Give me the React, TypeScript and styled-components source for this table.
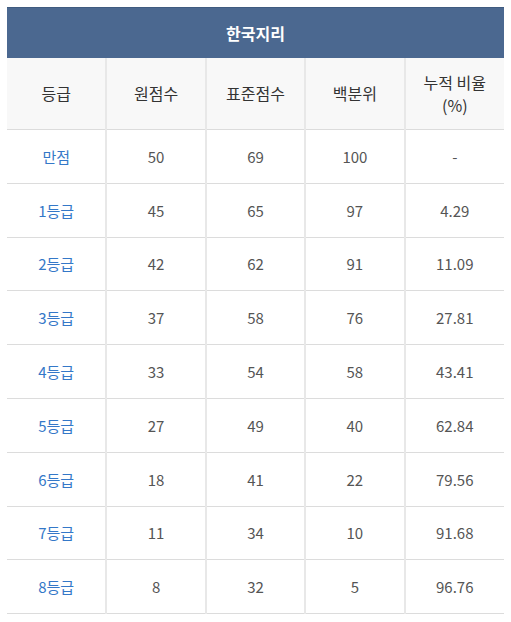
import React from "react";
import styled, { createGlobalStyle } from "styled-components";

const Global = createGlobalStyle`
  html, body { margin: 0; padding: 0; background: #fff; }
  body { font-family: "Noto Sans CJK KR", "Noto Sans", sans-serif; }
`;

const Wrap = styled.div`
  padding: 7px 7px 0 7px;
`;

const Table = styled.table`
  width: 497px;
  border-collapse: collapse;
  table-layout: fixed;
  font-size: 15px;
  color: #555;
`;

const TitleCell = styled.th`
  height: 50px;
  padding: 0;
  background: #4b6890;
  color: #fff;
  font-weight: 700;
  font-size: 16px;
  text-align: center;
  border-top: 1px solid #3f5b80;
`;

const HeadCell = styled.th<{ $last?: boolean }>`
  height: 71px;
  padding: 0;
  background: #f8f8f8;
  color: #333;
  font-weight: 400;
  font-size: 16px;
  line-height: 23px;
  text-align: center;
  border-bottom: 1px solid #dcdcdc;
  border-right: ${(p) => (p.$last ? "none" : "2px solid #e8e8e8")};
`;

const Cell = styled.td<{ $last?: boolean; $grade?: boolean }>`
  height: 52.8px;
  padding: 0;
  text-align: center;
  color: ${(p) => (p.$grade ? "#3478c8" : "#555")};
  border-bottom: 1px solid #dcdcdc;
  border-right: ${(p) => (p.$last ? "none" : "2px solid #e8e8e8")};
`;

const rows = [
  ["만점", "50", "69", "100", "-"],
  ["1등급", "45", "65", "97", "4.29"],
  ["2등급", "42", "62", "91", "11.09"],
  ["3등급", "37", "58", "76", "27.81"],
  ["4등급", "33", "54", "58", "43.41"],
  ["5등급", "27", "49", "40", "62.84"],
  ["6등급", "18", "41", "22", "79.56"],
  ["7등급", "11", "34", "10", "91.68"],
  ["8등급", "8", "32", "5", "96.76"],
];

export default function App() {
  return (
    <Wrap>
      <Global />
      <Table>
        <thead>
          <tr>
            <TitleCell colSpan={5}>한국지리</TitleCell>
          </tr>
          <tr>
            <HeadCell>등급</HeadCell>
            <HeadCell>원점수</HeadCell>
            <HeadCell>표준점수</HeadCell>
            <HeadCell>백분위</HeadCell>
            <HeadCell $last>
              누적 비율
              <br />
              (%)
            </HeadCell>
          </tr>
        </thead>
        <tbody>
          {rows.map((r, i) => (
            <tr key={i}>
              {r.map((c, j) => (
                <Cell key={j} $grade={j === 0} $last={j === 4}>
                  {c}
                </Cell>
              ))}
            </tr>
          ))}
        </tbody>
      </Table>
    </Wrap>
  );
}
